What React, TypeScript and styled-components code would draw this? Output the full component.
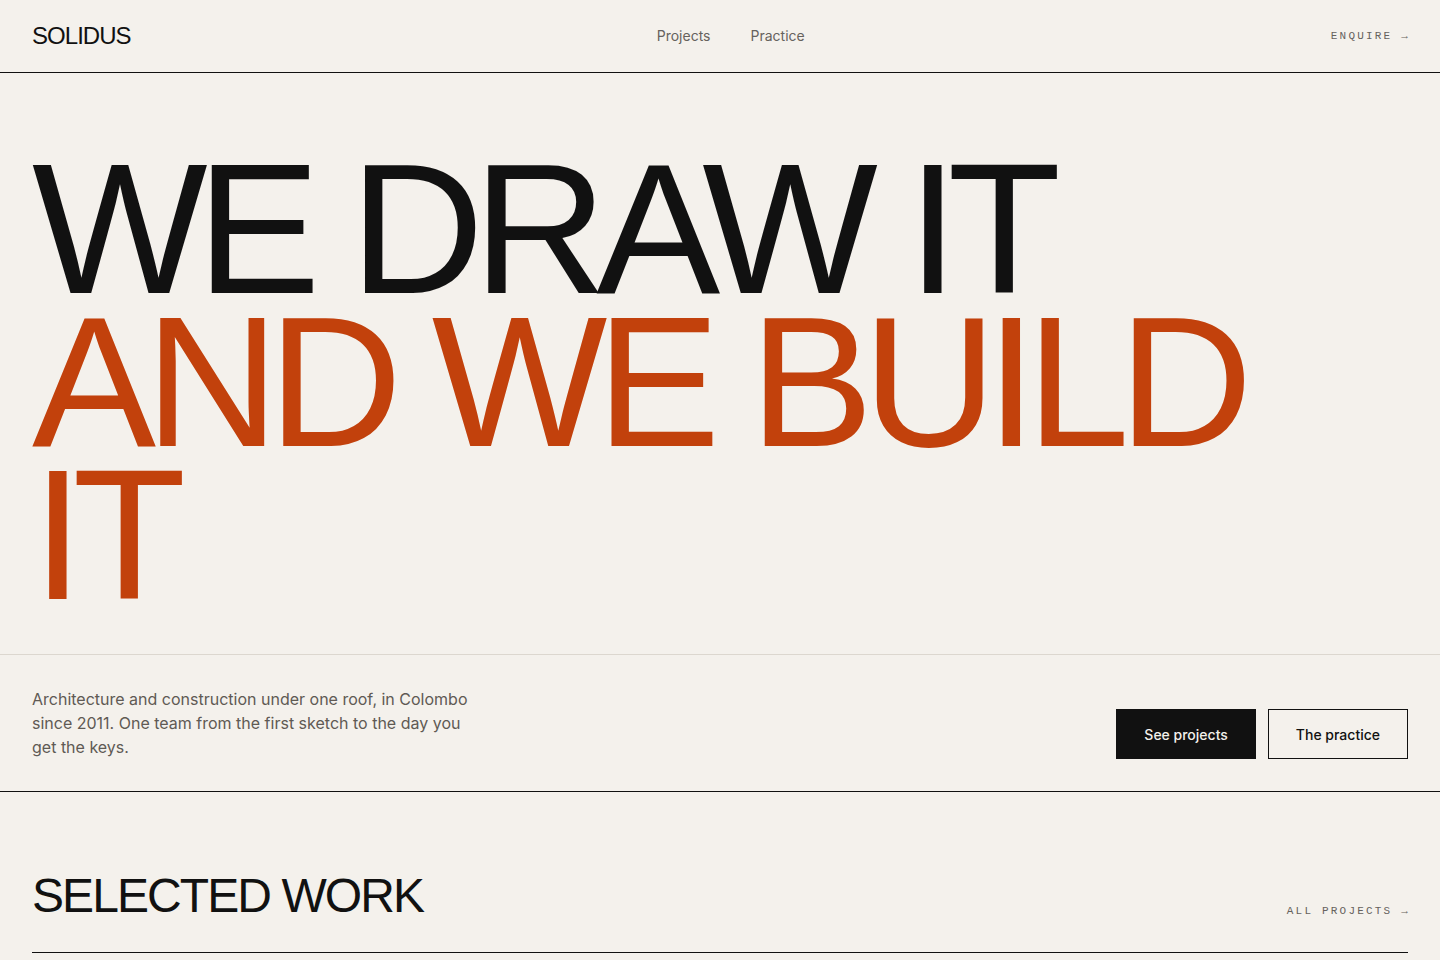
import React from 'react'
import styled, { createGlobalStyle } from 'styled-components'

const GlobalStyle = createGlobalStyle`
  * { box-sizing: border-box; }
  html, body {
    margin: 0;
    padding: 0;
    background: #f4f1ec;
    color: #111111;
    font-family: Inter, 'Noto Sans', sans-serif;
  }
  a { color: inherit; text-decoration: none; }
`

const Page = styled.div`
  min-height: 100vh;
  background: #f4f1ec;
`

const Header = styled.header`
  height: 73px;
  padding: 0 32px;
  display: flex;
  align-items: center;
  justify-content: space-between;
  border-bottom: 1px solid #111111;
`

const Logo = styled.a`
  font-family: 'Liberation Sans', Arial, sans-serif;
  font-size: 24px;
  letter-spacing: -0.04em;
  color: #111111;
`

const Nav = styled.nav`
  display: flex;
  gap: 40px;
  margin-top: -2px;
`

const NavLink = styled.a`
  font-size: 14px;
  color: #66625d;
`

const MonoLink = styled.a`
  font-family: 'Liberation Mono', 'DejaVu Sans Mono', monospace;
  font-size: 11px;
  letter-spacing: 0.2em;
  text-transform: uppercase;
  color: #66625d;
  margin-right: -2px;
`

const Hero = styled.section`
  padding: 79px 32px 43px;
  border-bottom: 1px solid #dcd7cf;
`

const Headline = styled.h1`
  margin: 0;
  font-family: 'Liberation Sans', Arial, sans-serif;
  font-weight: 400;
  font-size: 186px;
  line-height: 153px;
  letter-spacing: -0.06em;
  text-transform: uppercase;
`

const Line = styled.span<{ $accent?: boolean }>`
  display: block;
  color: ${(p) => (p.$accent ? '#c2410c' : '#111111')};
`

const IntroRow = styled.section`
  padding: 32px 32px;
  display: flex;
  justify-content: space-between;
  align-items: flex-end;
  border-bottom: 1px solid #111111;
`

const Lede = styled.p`
  margin: 0;
  max-width: 440px;
  font-size: 16px;
  line-height: 24px;
  color: #5f5a54;
`

const Actions = styled.div`
  display: flex;
  gap: 12px;
`

const Button = styled.a<{ $primary?: boolean }>`
  height: 50px;
  padding: 0 27px;
  display: inline-flex;
  align-items: center;
  justify-content: center;
  font-size: 14px;
  font-weight: 500;
  border: 1px solid #111111;
  background: ${(p) => (p.$primary ? '#111111' : 'transparent')};
  color: ${(p) => (p.$primary ? '#f4f1ec' : '#111111')};
`

const Work = styled.section`
  padding: 80px 32px 0;
`

const WorkHead = styled.div`
  display: flex;
  justify-content: space-between;
  align-items: baseline;
  padding-bottom: 32px;
  border-bottom: 1px solid #111111;
`

const SectionTitle = styled.h2`
  margin: 0;
  font-family: 'Liberation Sans', Arial, sans-serif;
  font-weight: 400;
  font-size: 48px;
  line-height: 1;
  letter-spacing: -0.04em;
  text-transform: uppercase;
`

const WorkLink = styled(MonoLink)`
  transform: translateY(2px);
`

export default function App() {
  return (
    <Page>
      <GlobalStyle />
      <Header>
        <Logo href="#">SOLIDUS</Logo>
        <Nav>
          <NavLink href="#">Projects</NavLink>
          <NavLink href="#">Practice</NavLink>
        </Nav>
        <MonoLink href="#">Enquire →</MonoLink>
      </Header>

      <Hero>
        <Headline>
          <Line>We draw it</Line>
          <Line $accent>and we build it</Line>
        </Headline>
      </Hero>

      <IntroRow>
        <Lede>
          Architecture and construction under one roof, in Colombo since 2011. One team from the
          first sketch to the day you get the keys.
        </Lede>
        <Actions>
          <Button $primary href="#">See projects</Button>
          <Button href="#">The practice</Button>
        </Actions>
      </IntroRow>

      <Work>
        <WorkHead>
          <SectionTitle>Selected work</SectionTitle>
          <WorkLink href="#">All projects →</WorkLink>
        </WorkHead>
      </Work>
    </Page>
  )
}
